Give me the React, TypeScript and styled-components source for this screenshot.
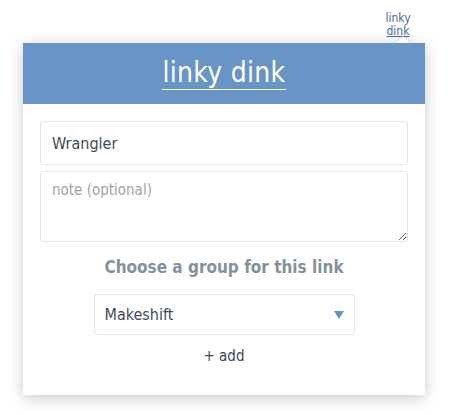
import { createGlobalStyle, styled } from "styled-components";

const GlobalStyle = createGlobalStyle`
  html, body {
    margin: 0;
    padding: 0;
    background: #ffffff;
    font-family: "DejaVu Sans Condensed", "Roboto", sans-serif;
  }
`;

const Page = styled.div`
  width: 450px;
  height: 415px;
  display: flex;
  flex-direction: column;
  align-items: flex-start;
  padding: 12px 0 0 23px;
  box-sizing: border-box;
`;

const TopLink = styled.a`
  align-self: flex-end;
  margin-right: 37px;
  font-size: 12px;
  line-height: 13px;
  color: #3f6aa0;
  text-decoration: none;
  text-align: center;
  width: 30px;
  span {
    display: block;
  }
  span:last-child {
    text-decoration: underline;
  }
`;

const Card = styled.div`
  position: relative;
  margin-top: 5px;
  width: 402px;
  height: 352px;
  background: #ffffff;
  box-shadow: 0 3px 14px rgba(0, 0, 0, 0.22);
  display: flex;
  flex-direction: column;
  &::before {
    content: "";
    position: absolute;
    top: -5px;
    right: 17px;
    width: 10px;
    height: 10px;
    background: #ffffff;
    transform: rotate(45deg);
    box-shadow: -1px -1px 4px rgba(0, 0, 0, 0.12);
  }
`;

const Header = styled.div`
  position: relative;
  height: 61px;
  background: #6894c6;
  display: flex;
  align-items: center;
  justify-content: center;
`;

const Title = styled.h1`
  margin: 0;
  font-size: 28px;
  font-weight: normal;
  color: #ffffff;
  letter-spacing: 0.3px;
  border-bottom: 1.5px solid #ffffff;
  line-height: 30px;
  padding-bottom: 1px;
`;

const Body = styled.div`
  padding: 17px 17px 0;
  display: flex;
  flex-direction: column;
  align-items: center;
`;

const Field = styled.input`
  width: 100%;
  box-sizing: border-box;
  height: 44px;
  border: 1px solid #dde5ee;
  border-radius: 3px;
  padding: 0 11px;
  font-family: inherit;
  font-size: 16px;
  color: #3e4a57;
  outline: none;
`;

const Note = styled.textarea`
  width: 100%;
  box-sizing: border-box;
  height: 71px;
  margin-top: 6px;
  border: 1px solid #dde5ee;
  border-radius: 3px;
  padding: 9px 11px;
  font-family: inherit;
  font-size: 15px;
  color: #3e4a57;
  resize: vertical;
  outline: none;
  &::placeholder {
    color: #a3a3a3;
  }
`;

const GroupHeading = styled.h2`
  margin: 15px 0 0;
  font-size: 17px;
  font-weight: bold;
  color: #86919a;
`;

const SelectBox = styled.div`
  margin-top: 17px;
  width: 261px;
  height: 41px;
  box-sizing: border-box;
  border: 1px solid #dde5ee;
  border-radius: 3px;
  display: flex;
  align-items: center;
  justify-content: space-between;
  padding: 0 10px;
  font-size: 16px;
  color: #3e4a57;
`;

const Caret = styled.span`
  width: 0;
  height: 0;
  border-left: 5px solid transparent;
  border-right: 5px solid transparent;
  border-top: 8px solid #6894c6;
`;

const AddLink = styled.a`
  margin-top: 12px;
  font-size: 15px;
  color: #3b4753;
  text-decoration: none;
`;

export default function App() {
  return (
    <>
      <GlobalStyle />
      <Page>
        <TopLink href="#">
          <span>linky</span>
          <span>dink</span>
        </TopLink>
        <Card>
          <Header>
            <Title>linky dink</Title>
          </Header>
          <Body>
            <Field defaultValue="Wrangler" />
            <Note placeholder="note (optional)" />
            <GroupHeading>Choose a group for this link</GroupHeading>
            <SelectBox>
              <span>Makeshift</span>
              <Caret />
            </SelectBox>
            <AddLink href="#">+ add</AddLink>
          </Body>
        </Card>
      </Page>
    </>
  );
}
